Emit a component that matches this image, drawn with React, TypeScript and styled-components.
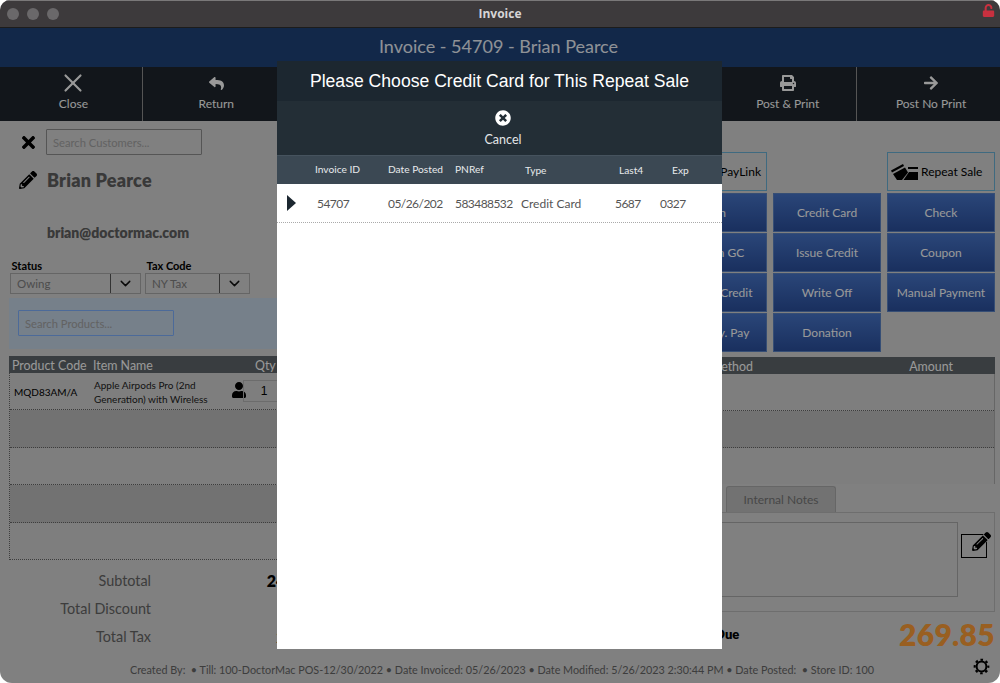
import React from 'react'
import styled, { createGlobalStyle } from 'styled-components'
import { ChevronDown, X } from 'lucide-react'
import {
  FaArrowRight,
  FaPencilAlt,
  FaPrint,
  FaReply,
  FaTimes,
  FaTimesCircle,
  FaUnlock,
  FaUser,
} from 'react-icons/fa'

const GlobalStyle = createGlobalStyle`
  html, body {
    margin: 0;
    background: #fff;
    font-family: Lato, "Open Sans", sans-serif;
  }
  * { box-sizing: border-box; }
`

const Window = styled.div`
  width: 1000px;
  height: 683px;
  display: flex;
  flex-direction: column;
  border-radius: 10px 10px 12px 12px;
  overflow: hidden;
  background: #d5d5d5;
`

const TitleBar = styled.div`
  height: 28px;
  flex: none;
  display: flex;
  align-items: center;
  padding: 0 7px;
  gap: 8px;
  position: relative;
  background: #3d3a3c;
  border-top: 1px solid #7a7879;
  border-bottom: 1px solid #1c1c1c;
`

const Dot = styled.span`
  width: 12px;
  height: 12px;
  border-radius: 50%;
  background: #6a686a;
`

const TitleText = styled.div`
  position: absolute;
  left: 0;
  right: 0;
  margin-top: -2px;
  text-align: center;
  color: #d6d5d6;
  font: bold 12px "Open Sans", sans-serif;
`

const LockIcon = styled(FaUnlock)`
  position: absolute;
  right: 5px;
  top: 3px;
  width: 13px;
  height: 13px;
  color: #c8303f;
`

const Content = styled.div`
  position: relative;
  flex: 1;
  display: flex;
  flex-direction: column;
  min-height: 0;
`

const Scrim = styled.div`
  position: absolute;
  inset: 0;
  background: rgba(0, 0, 0, 0.4);
`

const InvoiceHeader = styled.div`
  height: 39px;
  flex: none;
  display: flex;
  align-items: center;
  justify-content: center;
  padding: 0 3px 4px 0;
  background: #1e437b;
  color: #eef3fb;
  font-size: 18px;
`

const Toolbar = styled.div`
  height: 54px;
  flex: none;
  display: grid;
  grid-template-columns: repeat(7, 1fr);
  background: #1e262d;
`

const ToolButton = styled.div`
  display: flex;
  flex-direction: column;
  align-items: center;
  gap: 4px;
  padding: 7px 0 0 5px;
  color: #fff;
  font-size: 12px;
  border-right: 1.5px solid #8e8e8e;
  &:last-child { border-right: 0; }
`

const ToolIcon = styled.div`
  height: 18px;
  display: flex;
  align-items: center;
  justify-content: center;
`

const Page = styled.div`
  flex: 1;
  display: flex;
  min-height: 0;
  padding: 0 5px 0 9px;
  justify-content: space-between;
`

const LeftColumn = styled.div`
  width: 502px;
  display: flex;
  flex-direction: column;
`

const RightColumn = styled.div`
  width: 475px;
  display: flex;
  flex-direction: column;
  padding-top: 31px;
`

const CustomerRow = styled.div`
  display: flex;
  align-items: center;
  gap: 8px;
  margin: 8px 0 0 10px;
  height: 26px;
`

const TextInput = styled.div<{ $focus?: boolean }>`
  width: 156px;
  height: 26px;
  display: flex;
  align-items: center;
  padding-left: 6px;
  border: ${(p) => (p.$focus ? '1.5px solid #7fb1ff' : '1.5px solid #8e8e8e')};
  border-radius: 1px;
  color: #a4a4a4;
  font-size: 11.2px;
`

const NameRow = styled.div`
  display: flex;
  align-items: center;
  gap: 10px;
  margin: 12px 0 0 10px;
  height: 26px;
  color: #606060;
  font-size: 18px;
  font-weight: 800;
  letter-spacing: 0.2px;
  svg { color: #000; }
`

const Email = styled.div`
  margin: 31px 0 0 38px;
  color: #606060;
  font-size: 14px;
  font-weight: 800;
  height: 18px;
`

const FieldRow = styled.div`
  display: flex;
  gap: 4px;
  margin: 17px 0 0 1px;
`

const Field = styled.div`
  display: flex;
  flex-direction: column;
  gap: 1px;
  color: #000;
  font-size: 11px;
  font-weight: 700;
`

const FieldLabel = styled.span`
  padding-left: 1.5px;
`

const SelectBox = styled.div<{ $w: number }>`
  width: ${(p) => p.$w}px;
  height: 21px;
  display: grid;
  grid-template-columns: 1fr 30px;
  align-items: center;
  border: 1px solid #a8a8a8;
  color: #808080;
  font-size: 11.5px;
  font-weight: 400;
  span { padding-left: 6px; }
`

const ChevronCell = styled.div`
  height: 100%;
  display: flex;
  align-items: center;
  justify-content: center;
  color: #111;
  border-left: 1.5px solid #555;
`

const ProductSearch = styled.div`
  height: 51px;
  margin-top: 4px;
  padding: 12px 9px;
  background: #c5d5e6;
`

const HeaderBand = styled.div<{ $top: number }>`
  height: 17px;
  margin-top: ${(p) => p.$top}px;
  padding-top: 2px;
  flex: none;
  display: flex;
  align-items: center;
  background: #5f676b;
  color: #fff;
  font-size: 12.4px;
`

const ProductCodeHead = styled.span`
  width: 84px;
  padding-left: 3px;
`

const ItemNameHead = styled.span`
  flex: 1;
`

const QtyHead = styled.span`
  width: 256px;
`

const LinesBox = styled.div`
  height: 187px;
  flex: none;
  display: flex;
  flex-direction: column;
  border: 1px dotted #666;
  border-top: 0;
`

const LineRow = styled.div<{ $alt?: boolean }>`
  flex: 1;
  display: flex;
  align-items: center;
  background: ${(p) => (p.$alt ? '#bebebe' : '#d2d2d2')};
  border-bottom: 1px dotted #666;
  &:last-child { border-bottom: 0; }
`

const CodeCell = styled.div`
  width: 84px;
  padding: 1px 0 0 4px;
  color: #000;
  font-size: 10px;
`

const ItemCell = styled.div`
  width: 137px;
  padding-top: 2px;
  color: #1c1c1c;
  font-size: 10px;
  line-height: 14px;
`

const RowPerson = styled(FaUser)`
  width: 16px;
  height: 16px;
  margin-bottom: 2px;
  color: #000;
`

const QtyInput = styled.div`
  width: 50px;
  height: 22px;
  margin-left: -4px;
  display: flex;
  align-items: center;
  justify-content: center;
  padding-right: 8px;
  border: 1px solid #b5b5b5;
  color: #000;
  font: 12px "Liberation Sans", sans-serif;
`

const Totals = styled.div`
  margin-top: 6px;
  display: flex;
  flex-direction: column;
`

const TotalRow = styled.div`
  height: 28px;
  display: grid;
  grid-template-columns: 142px 166px;
  align-items: center;
  color: #666;
  font-size: 14.4px;
  text-align: right;
`

const TotalValue = styled.span<{ $strong?: boolean }>`
  color: #000;
  font-size: 16px;
  font-weight: ${(p) => (p.$strong ? 800 : 400)};
`

const PayGrid = styled.div`
  align-self: flex-end;
  display: grid;
  grid-template-columns: repeat(3, 108px);
  grid-template-rows: 40px;
  grid-auto-rows: 39px;
  gap: 1px 6px;
`

const OutlineButton = styled.div<{ $end?: boolean }>`
  height: 39px;
  display: flex;
  align-items: center;
  justify-content: ${(p) => (p.$end ? 'flex-end' : 'flex-start')};
  gap: 3px;
  padding: 0 5px 0 2px;
  border: 1.5px solid #69b1d5;
  color: #000;
  font-size: 12px;
`

const GridGap = styled.div``

const PayButton = styled.div`
  display: flex;
  align-items: center;
  justify-content: center;
  white-space: nowrap;
  background: linear-gradient(#4775c9, #2b509e);
  border: 1px solid #5a82c4;
  color: #fff;
  font-size: 12px;
`

const PaymentRows = styled.div`
  height: 110px;
  flex: none;
  display: flex;
  flex-direction: column;
  border-right: 1px solid #aaa;
`

const MethodHead = styled.span`
  width: 233px;
  text-align: right;
`

const AmountHead = styled.span`
  width: 200px;
  text-align: right;
`

const Tabs = styled.div`
  display: flex;
  height: 26px;
  margin-top: 2px;
  padding-left: 206px;
`

const Tab = styled.div`
  width: 110px;
  display: flex;
  align-items: center;
  justify-content: center;
  background: #bebebe;
  border: 1px solid #aaa;
  border-bottom: 0;
  border-radius: 3px 3px 0 0;
  color: #777;
  font-size: 12px;
`

const NotesPanel = styled.div`
  height: 100px;
  flex: none;
  display: flex;
  align-items: flex-start;
  gap: 3px;
  padding: 9px 3px 0 0;
  border: 1px solid #b7b7b7;
`

const NotesArea = styled.div`
  flex: 1;
  height: 75px;
  border: 1px solid #a8a8a8;
`

const EditIcon = styled.div`
  width: 30px;
  height: 30px;
  margin-top: 10px;
  position: relative;
`

const EditSquare = styled.div`
  position: absolute;
  left: 0;
  top: 2px;
  width: 26px;
  height: 24px;
  border: 1.5px solid #000;
`

const EditPencil = styled(FaPencilAlt)`
  position: absolute;
  right: 0;
  top: 0;
  width: 19px;
  height: 19px;
  color: #000;
  stroke: #d5d5d5;
  stroke-width: 30px;
  paint-order: stroke;
`

const DueRow = styled.div`
  display: flex;
  align-items: center;
  justify-content: space-between;
  height: 42px;
  margin-top: 1px;
`

const DueLabel = styled.span`
  padding-left: 146px;
  color: #000;
  font-size: 13px;
  font-weight: 800;
`

const DueAmount = styled.span`
  color: #ff9e38;
  font-size: 30px;
  font-weight: 800;
  letter-spacing: 0.3px;
`

const StatusBar = styled.div`
  height: 26px;
  flex: none;
  display: flex;
  align-items: center;
  justify-content: center;
  position: relative;
  padding: 0 0 1px 4px;
  color: #666;
  font-size: 10.8px;
  white-space: pre;
`

const GearIcon = styled.svg`
  position: absolute;
  right: 10px;
  top: 1px;
  fill: none;
  stroke: #000;
`

const Modal = styled.div`
  position: absolute;
  left: 277px;
  top: 33px;
  width: 445px;
  height: 588px;
  display: flex;
  flex-direction: column;
  background: #fff;
`

const ModalTitle = styled.div`
  height: 40px;
  flex: none;
  display: flex;
  align-items: center;
  justify-content: center;
  background: #1c2730;
  color: #fff;
  font: 17.6px "Liberation Sans", sans-serif;
`

const CancelBar = styled.div`
  height: 54px;
  flex: none;
  display: flex;
  flex-direction: column;
  align-items: center;
  justify-content: flex-end;
  gap: 6px;
  padding: 0 0 8px 7px;
  background: #232e36;
  color: #e4e6e8;
  font-size: 12.5px;
`

const ChoiceHead = styled.div`
  height: 29px;
  flex: none;
  display: grid;
  grid-template-columns: 38px 73px 67px 66px 94px 45px 1fr;
  align-items: center;
  padding-bottom: 2px;
  background: #3b4853;
  border-top: 1px solid #46535e;
  color: #e8eaec;
  font-size: 10.2px;
`

const HeadCell = styled.div<{ $indent?: number; $drop?: number }>`
  padding-left: ${(p) => p.$indent ?? 0}px;
  padding-top: ${(p) => p.$drop ?? 0}px;
`

const ChoiceRow = styled.div`
  height: 39px;
  flex: none;
  display: grid;
  grid-template-columns: 38px 73px 67px 66px 94px 45px 1fr;
  align-items: center;
  border-bottom: 1px dotted #aaa;
  color: #555;
  font-size: 12px;
`

const RowCell = styled.div<{ $indent?: number; $digits?: boolean }>`
  padding-left: ${(p) => p.$indent ?? 0}px;
  white-space: nowrap;
  letter-spacing: ${(p) => (p.$digits ? '-0.55px' : '0')};
`

const RowArrow = styled.svg`
  margin-left: 10px;
  display: block;
  fill: #1c2730;
`

const toolItems = [
  { label: 'Close', icon: <X size={30} strokeWidth={1.7} /> },
  { label: 'Return', icon: <FaReply size={15} /> },
  { label: 'Void', icon: <FaTimes size={15} /> },
  { label: 'Email', icon: <FaTimes size={15} /> },
  { label: 'Save', icon: <FaTimes size={15} /> },
  { label: 'Post & Print', icon: <FaPrint size={16} /> },
  { label: 'Post No Print', icon: <FaArrowRight size={16} /> },
]

const payButtons = [
  'Cash', 'Credit Card', 'Check',
  'Redeem GC', 'Issue Credit', 'Coupon',
  'Account Credit', 'Write Off', 'Manual Payment',
  'Third Pty. Pay', 'Donation',
]

const CardsIcon = () => (
  <svg width="28" height="18" viewBox="0 0 28 18" fill="#000">
    <path d="M1 7.5 L13 1 L14 3 L2 9.5 Z" />
    <path d="M3 11 L15 4.5 L18 9.5 L12 17 L7 17 Z" />
    <path d="M18 4 H28 V6 H18 Z" />
    <path d="M19 9 H28 V17 H13.5 Z" />
  </svg>
)

export default function App() {
  return (
    <Window>
      <GlobalStyle />
      <TitleBar>
        <Dot />
        <Dot />
        <Dot />
        <TitleText>Invoice</TitleText>
        <LockIcon />
      </TitleBar>
      <Content>
        <InvoiceHeader>Invoice - 54709 - Brian Pearce</InvoiceHeader>
        <Toolbar>
          {toolItems.map((item) => (
            <ToolButton key={item.label}>
              <ToolIcon>{item.icon}</ToolIcon>
              {item.label}
            </ToolButton>
          ))}
        </Toolbar>
        <Page>
          <LeftColumn>
            <CustomerRow>
              <FaTimes size={19} color="#000" />
              <TextInput>Search Customers...</TextInput>
            </CustomerRow>
            <NameRow>
              <FaPencilAlt size={18} />
              Brian Pearce
            </NameRow>
            <Email>brian@doctormac.com</Email>
            <FieldRow>
              <Field>
                <FieldLabel>Status</FieldLabel>
                <SelectBox $w={131}>
                  <span>Owing</span>
                  <ChevronCell><ChevronDown size={17} /></ChevronCell>
                </SelectBox>
              </Field>
              <Field>
                <FieldLabel>Tax Code</FieldLabel>
                <SelectBox $w={105}>
                  <span>NY Tax</span>
                  <ChevronCell><ChevronDown size={17} /></ChevronCell>
                </SelectBox>
              </Field>
            </FieldRow>
            <ProductSearch>
              <TextInput $focus>Search Products...</TextInput>
            </ProductSearch>
            <HeaderBand $top={7}>
              <ProductCodeHead>Product Code</ProductCodeHead>
              <ItemNameHead>Item Name</ItemNameHead>
              <QtyHead>Qty</QtyHead>
            </HeaderBand>
            <LinesBox>
              <LineRow>
                <CodeCell>MQD83AM/A</CodeCell>
                <ItemCell>Apple Airpods Pro (2nd Generation) with Wireless</ItemCell>
                <RowPerson />
                <QtyInput>1</QtyInput>
              </LineRow>
              <LineRow $alt />
              <LineRow />
              <LineRow $alt />
              <LineRow />
            </LinesBox>
            <Totals>
              <TotalRow>
                Subtotal
                <TotalValue $strong>247.85</TotalValue>
              </TotalRow>
              <TotalRow>
                Total Discount
                <TotalValue>0.00</TotalValue>
              </TotalRow>
              <TotalRow>
                Total Tax
                <TotalValue>22.00</TotalValue>
              </TotalRow>
            </Totals>
          </LeftColumn>
          <RightColumn>
            <PayGrid>
              <OutlineButton $end>
                <CardsIcon />
                PayLink
              </OutlineButton>
              <GridGap />
              <OutlineButton>
                <CardsIcon />
                Repeat Sale
              </OutlineButton>
              {payButtons.map((label) => (
                <PayButton key={label}>{label}</PayButton>
              ))}
            </PayGrid>
            <HeaderBand $top={5}>
              <MethodHead>Method</MethodHead>
              <AmountHead>Amount</AmountHead>
            </HeaderBand>
            <PaymentRows>
              <LineRow />
              <LineRow $alt />
              <LineRow />
            </PaymentRows>
            <Tabs>
              <Tab>Internal Notes</Tab>
            </Tabs>
            <NotesPanel>
              <NotesArea />
              <EditIcon>
                <EditSquare />
                <EditPencil />
              </EditIcon>
            </NotesPanel>
            <DueRow>
              <DueLabel>Balance Due</DueLabel>
              <DueAmount>269.85</DueAmount>
            </DueRow>
          </RightColumn>
        </Page>
        <StatusBar>
          Created By:  • Till: 100-DoctorMac POS-12/30/2022 • Date Invoiced: 05/26/2023 • Date Modified: 5/26/2023 2:30:44 PM • Date Posted:  • Store ID: 100
          <GearIcon width="17" height="17" viewBox="0 0 16 16">
            <circle cx="8" cy="8" r="4.6" strokeWidth="1.9" />
            <circle cx="8" cy="8" r="6.4" strokeWidth="2" strokeDasharray="2.4 2.63" strokeDashoffset="1.2" />
          </GearIcon>
        </StatusBar>
        <Scrim />
        <Modal>
          <ModalTitle>Please Choose Credit Card for This Repeat Sale</ModalTitle>
          <CancelBar>
            <FaTimesCircle size={16} color="#fff" />
            Cancel
          </CancelBar>
          <ChoiceHead>
            <HeadCell />
            <HeadCell>Invoice ID</HeadCell>
            <HeadCell>Date Posted</HeadCell>
            <HeadCell>PNRef</HeadCell>
            <HeadCell $indent={4} $drop={1}>Type</HeadCell>
            <HeadCell $indent={4} $drop={1}>Last4</HeadCell>
            <HeadCell $indent={12} $drop={1}>Exp</HeadCell>
          </ChoiceHead>
          <ChoiceRow>
            <RowArrow width="10" height="16" viewBox="0 0 10 16">
              <path d="M0 0 L9 8 L0 16 Z" />
            </RowArrow>
            <RowCell $indent={2} $digits>54707</RowCell>
            <RowCell $digits>05/26/202</RowCell>
            <RowCell $digits>583488532</RowCell>
            <RowCell>Credit Card</RowCell>
            <RowCell $digits>5687</RowCell>
            <RowCell $digits>0327</RowCell>
          </ChoiceRow>
        </Modal>
      </Content>
    </Window>
  )
}
